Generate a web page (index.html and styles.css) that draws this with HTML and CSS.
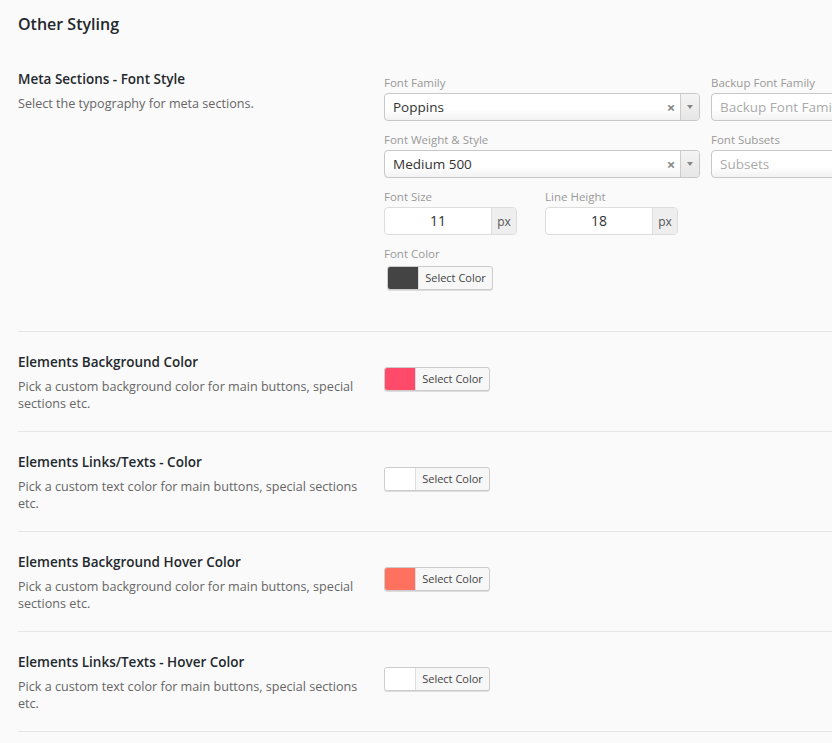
FILE: index.html
```html
<!DOCTYPE html>
<html>
<head>
<meta charset="utf-8">
<link rel="stylesheet" href="styles.css">
</head>
<body>
<div class="page">
  <h2 class="page-title">Other Styling</h2>

  <div class="row row-first">
    <div class="info">
      <div class="title">Meta Sections - Font Style</div>
      <div class="desc">Select the typography for meta sections.</div>
    </div>
    <div class="controls controls-first">
      <div class="pair">
        <div class="field field-wide">
          <div class="label">Font Family</div>
          <div class="select">
            <span class="sel-text">Poppins</span>
            <span class="sel-clear">&times;</span>
            <span class="sel-arrow"><span class="tri"></span></span>
          </div>
        </div>
        <div class="field field-side">
          <div class="label">Backup Font Family</div>
          <div class="select select-empty">
            <span class="sel-text placeholder">Backup Font Family</span>
          </div>
        </div>
      </div>
      <div class="pair">
        <div class="field field-wide">
          <div class="label">Font Weight &amp; Style</div>
          <div class="select">
            <span class="sel-text">Medium 500</span>
            <span class="sel-clear">&times;</span>
            <span class="sel-arrow"><span class="tri"></span></span>
          </div>
        </div>
        <div class="field field-side">
          <div class="label">Font Subsets</div>
          <div class="select select-empty">
            <span class="sel-text placeholder">Subsets</span>
          </div>
        </div>
      </div>
      <div class="pair pair-small">
        <div class="field field-num">
          <div class="label">Font Size</div>
          <div class="num">
            <span class="num-val">11</span>
            <span class="num-unit">px</span>
          </div>
        </div>
        <div class="field field-num">
          <div class="label">Line Height</div>
          <div class="num">
            <span class="num-val">18</span>
            <span class="num-unit">px</span>
          </div>
        </div>
      </div>
      <div class="field">
        <div class="label">Font Color</div>
        <div class="color-wrap">
          <div class="color-btn"><span class="swatch sw-dark"></span><span class="color-text">Select Color</span></div>
        </div>
      </div>
    </div>
  </div>

  <div class="row">
    <div class="info">
      <div class="title">Elements Background Color</div>
      <div class="desc">Pick a custom background color for main buttons, special sections etc.</div>
    </div>
    <div class="controls controls-color">
      <div class="color-btn"><span class="swatch sw-pink"></span><span class="color-text">Select Color</span></div>
    </div>
  </div>

  <div class="row">
    <div class="info">
      <div class="title">Elements Links/Texts - Color</div>
      <div class="desc">Pick a custom text color for main buttons, special sections etc.</div>
    </div>
    <div class="controls controls-color">
      <div class="color-btn"><span class="swatch sw-white"></span><span class="color-text">Select Color</span></div>
    </div>
  </div>

  <div class="row">
    <div class="info">
      <div class="title">Elements Background Hover Color</div>
      <div class="desc">Pick a custom background color for main buttons, special sections etc.</div>
    </div>
    <div class="controls controls-color">
      <div class="color-btn"><span class="swatch sw-coral"></span><span class="color-text">Select Color</span></div>
    </div>
  </div>

  <div class="row">
    <div class="info">
      <div class="title">Elements Links/Texts - Hover Color</div>
      <div class="desc">Pick a custom text color for main buttons, special sections etc.</div>
    </div>
    <div class="controls controls-color">
      <div class="color-btn"><span class="swatch sw-white"></span><span class="color-text">Select Color</span></div>
    </div>
  </div>
</div>
</body>
</html>
```

FILE: styles.css
```css
* { box-sizing: border-box; }

html, body {
  margin: 0;
  padding: 0;
  background: #fafafa;
  overflow: hidden;
}

body {
  font-family: "Open Sans", "Noto Sans", sans-serif;
  color: #23282d;
  width: 832px;
  height: 743px;
}

.page {
  padding-left: 18px;
  width: 900px;
}

.page-title {
  margin: 0;
  padding-top: 12px;
  font-size: 16px;
  line-height: 24px;
  font-weight: 600;
  color: #23282d;
  height: 49px;
}

.row {
  display: grid;
  grid-template-columns: 366px 1fr;
  padding: 20px 0 19px;
  border-bottom: 1px solid #e5e5e5;
  height: 100px;
}

.row-first {
  height: 283px;
}

.title {
  font-size: 13.5px;
  font-weight: 600;
  line-height: 20px;
  color: #23282d;
}

.desc {
  margin-top: 6px;
  font-size: 12.6px;
  line-height: 17px;
  color: #666;
  width: 340px;
}

.controls {
  display: flex;
  flex-direction: column;
}

.controls-first {
  padding-top: 6px;
}

.controls-color {
  padding-top: 15px;
}

.pair {
  display: flex;
  gap: 11px;
}

.pair-small {
  gap: 28px;
}

.field {
  margin-bottom: 11px;
}

.field-wide { width: 316px; }
.field-side { width: 160px; }
.field-num { width: 133px; }

.label {
  font-size: 11.5px;
  line-height: 16px;
  color: #999;
  margin-bottom: 2px;
  white-space: nowrap;
}

.select {
  height: 28px;
  border: 1px solid #c8c8c8;
  border-radius: 4px;
  background: linear-gradient(#ffffff 60%, #f2f2f2);
  display: flex;
  align-items: center;
  overflow: hidden;
}

.sel-text {
  flex: 1;
  padding-left: 8px;
  font-size: 13.5px;
  color: #333;
  white-space: nowrap;
}

.placeholder {
  color: #aaa;
}

.sel-clear {
  width: 16px;
  font-size: 15px;
  font-weight: 700;
  color: #888;
  text-align: center;
  line-height: 26px;
}

.sel-arrow {
  width: 19px;
  height: 26px;
  margin-left: 1px;
  border-left: 1px solid #ccc;
  background: linear-gradient(#f4f4f4, #e6e6e6);
  display: flex;
  align-items: center;
  justify-content: center;
}

.tri {
  width: 0;
  height: 0;
  border-left: 3px solid transparent;
  border-right: 3px solid transparent;
  border-top: 4px solid #888;
}

.num {
  display: flex;
  height: 28px;
  border: 1px solid #ddd;
  border-radius: 4px;
  overflow: hidden;
  background: #fff;
}

.num-val {
  flex: 1;
  text-align: center;
  font-size: 14px;
  line-height: 26px;
  color: #333;
}

.num-unit {
  width: 25px;
  border-left: 1px solid #ddd;
  background: #eee;
  font-size: 12px;
  line-height: 28px;
  text-align: center;
  color: #555;
}

.color-wrap {
  padding: 2px 3px 0;
}

.color-btn {
  display: inline-flex;
  height: 24px;
  width: 106px;
  border: 1px solid #ccc;
  border-radius: 3px;
  overflow: hidden;
  background: #f7f7f7;
  box-shadow: 0 1px 0 #ddd;
}

.swatch {
  width: 31px;
  height: 100%;
  border-right: 1px solid #ddd;
}

.sw-dark { background: #444444; }
.sw-pink { background: #ff4a6a; }
.sw-coral { background: #ff715f; }
.sw-white { background: #ffffff; }

.color-text {
  flex: 1;
  font-size: 11px;
  line-height: 22px;
  text-align: center;
  color: #444;
}
```
